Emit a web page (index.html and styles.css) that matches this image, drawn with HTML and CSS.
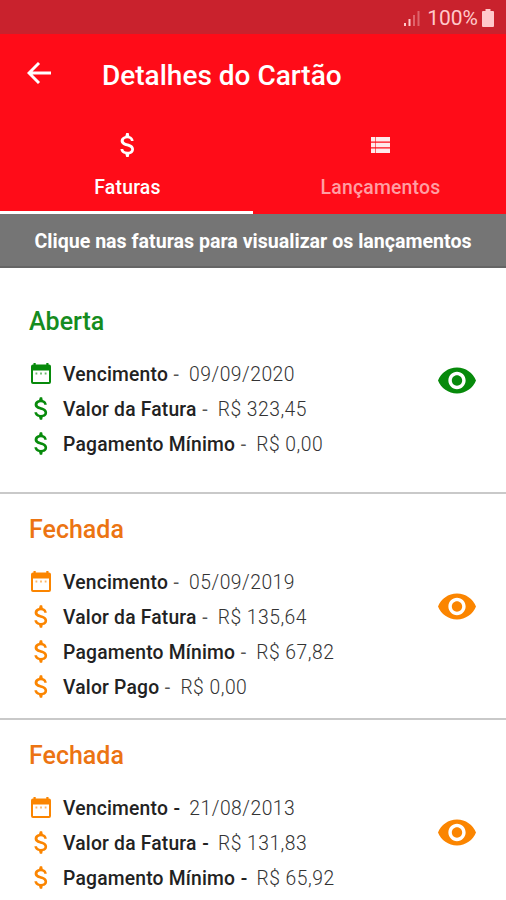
FILE: index.html
```html
<!DOCTYPE html>
<html lang="pt-BR">
<head>
<meta charset="utf-8">
<title>Detalhes do Cartão</title>
<link rel="stylesheet" href="styles.css">
</head>
<body>
<svg class="sprite" aria-hidden="true">
  <symbol id="dollar" viewBox="6 3 12 18"><path d="M11.8 10.9c-2.27-.59-3-1.2-3-2.15 0-1.09 1.01-1.85 2.7-1.85 1.78 0 2.64.85 2.7 2.1h2.01c-.07-1.72-1.12-3.3-3.21-3.81L12.500 3h-1.800L10 5.160c-1.940.420-3.500 1.680-3.500 3.610 0 2.310 1.910 3.460 4.700 4.130 2.500.600 3.200 1.480 3.200 2.410 0 .690-.690 1.790-2.900 1.790-2.060 0-2.970-.920-3.080-2.100h-2.100c.120 2.190 1.760 3.420 3.680 3.830L10.700 21h1.800l.500-2.150c1.950-.370 3.500-1.500 3.500-3.550 0-2.840-2.430-3.810-4.700-4.400z"/></symbol>
  <symbol id="calendar" viewBox="0 0 20 21"><path fill-rule="evenodd" d="M2.500 0h2.200v1.500h10.600V0h2.200v1.500H18a2 2 0 0 1 2 2V19a2 2 0 0 1-2 2H2a2 2 0 0 1-2-2V3.500a2 2 0 0 1 2-2h.500zM2 7.500V19h16V7.500z"/><path opacity=".6" d="M4.500 9.500h1.800v2H4.500zM9.100 9.500h1.800v2H9.100zM13.700 9.500h1.800v2h-1.800z"/></symbol>
  <symbol id="eye" viewBox="1 4.500 22 15"><path d="M12 4.500C7 4.500 2.730 7.610 1 12c1.730 4.390 6 7.500 11 7.500s9.270-3.110 11-7.500c-1.730-4.390-6-7.500-11-7.500zM12 17c-2.760 0-5-2.240-5-5s2.240-5 5-5 5 2.240 5 5-2.240 5-5 5zm0-8c-1.660 0-3 1.340-3 3s1.340 3 3 3 3-1.340 3-3-1.340-3-3-3z"/></symbol>
</svg>
<div class="status">
  <svg class="signal" viewBox="0 0 16 16"><path d="M0 13h2v3H0z"/><path d="M4.500 9h2v7h-2z"/><path opacity=".4" d="M9 5h2v11H9zM13.500 1h2v15h-2z"/></svg>
  <span class="charge">100%</span>
  <svg class="battery" viewBox="0 0 12 18"><path d="M3.500 0h5v2H11q1 0 1 1v14q0 1-1 1H1q-1 0-1-1V3q0-1 1-1h2.500z"/></svg>
</div>
<header class="header">
  <div class="bar">
    <svg class="back" viewBox="0 0 24 22"><path d="M12 1L2 11l10 10M2 11h22"/></svg>
    <h1 class="title"><span>Detalhes do Cartão</span></h1>
  </div>
  <nav class="tabs">
    <div class="tab active"><svg class="tab-dollar"><use href="#dollar"/></svg><span>Faturas</span></div>
    <div class="tab"><svg class="tab-list" viewBox="0 0 19 16"><path d="M0 0h4v4.600H0zM4.600 0H19v4.600H4.600zM0 5.700h4v4.600H0zM4.600 5.700H19v4.600H4.600zM0 11.400h4V16H0zM4.600 11.400H19V16H4.600z"/></svg><span>Lançamentos</span></div>
  </nav>
</header>
<div class="hint"><span>Clique nas faturas para visualizar os lançamentos</span></div>
<main>
  <section class="invoice open">
    <h2><span>Aberta</span></h2>
    <div class="row"><svg class="cal"><use href="#calendar"/></svg><b>Vencimento</b><i>-</i><span>09/09/2020</span></div>
    <div class="row"><svg class="dol"><use href="#dollar"/></svg><b>Valor da Fatura</b><i>-</i><span>R$ 323,45</span></div>
    <div class="row"><svg class="dol"><use href="#dollar"/></svg><b>Pagamento Mínimo</b><i>-</i><span>R$ 0,00</span></div>
    <svg class="eye"><use href="#eye"/></svg>
  </section>
  <section class="invoice">
    <h2><span>Fechada</span></h2>
    <div class="row"><svg class="cal"><use href="#calendar"/></svg><b>Vencimento</b><i>-</i><span>05/09/2019</span></div>
    <div class="row"><svg class="dol"><use href="#dollar"/></svg><b>Valor da Fatura</b><i>-</i><span>R$ 135,64</span></div>
    <div class="row"><svg class="dol"><use href="#dollar"/></svg><b>Pagamento Mínimo</b><i>-</i><span>R$ 67,82</span></div>
    <div class="row"><svg class="dol"><use href="#dollar"/></svg><b>Valor Pago</b><i>-</i><span>R$ 0,00</span></div>
    <svg class="eye"><use href="#eye"/></svg>
  </section>
  <section class="invoice last">
    <h2><span>Fechada</span></h2>
    <div class="row"><svg class="cal"><use href="#calendar"/></svg><b>Vencimento</b><i>-</i><span>21/08/2013</span></div>
    <div class="row"><svg class="dol"><use href="#dollar"/></svg><b>Valor da Fatura</b><i>-</i><span>R$ 131,83</span></div>
    <div class="row"><svg class="dol"><use href="#dollar"/></svg><b>Pagamento Mínimo</b><i>-</i><span>R$ 65,92</span></div>
    <svg class="eye"><use href="#eye"/></svg>
  </section>
</main>
</body>
</html>
```
FILE: styles.css
```css
* { box-sizing: border-box; }
body {
  margin: 0;
  background: #fff;
  font-family: Roboto, "Liberation Sans", sans-serif;
}
svg { display: block; flex: none; fill: currentColor; }
h1, h2 { margin: 0; font-weight: 500; }
.sprite { position: absolute; width: 0; height: 0; }

.status {
  display: flex;
  align-items: center;
  justify-content: flex-end;
  height: 34px;
  padding: 1px 12px 0 0;
  background: #c9222d;
  color: #ffc9cb;
}
.signal { width: 16px; height: 16px; margin: 1px 7px 0 0; }
.charge { font-size: 21px; line-height: 24px; margin-right: 4px; }
.battery { width: 12px; height: 18px; }

.header { height: 180px; background: #ff0c18; color: #fff; }
.bar { display: flex; align-items: center; height: 80px; padding-left: 27px; }
.back { width: 24px; height: 22px; margin: -3px 51px 0 0; fill: none; stroke: #fff; stroke-width: 2.900; }
.title { font-size: 28px; line-height: 32px; padding-top: 3px; }
.tabs { display: flex; height: 100px; }
.tab {
  flex: 1;
  display: flex;
  flex-direction: column;
  align-items: center;
  border-bottom: 3px solid transparent;
  padding: 19px 0 0 2px;
  font-size: 19.400px;
  font-weight: 500;
  line-height: 24px;
  letter-spacing: 0.200px;
  color: #ff9ea3;
}
.tab.active { color: #fff; border-color: #fff; }
.tab-dollar { width: 16px; height: 24px; margin-bottom: 19px; }
.tab-list { width: 19px; height: 16px; margin: 4px 0 23px; fill: #ffe9ea; }

.hint {
  height: 54px;
  display: flex;
  align-items: center;
  justify-content: center;
  padding-top: 2px;
  background: #757575;
  border-bottom: 2px solid #656565;
  color: #fff;
  font-size: 19.600px;
  font-weight: 700;
}

.invoice {
  position: relative;
  height: 226px;
  padding: 20px 29px 0;
  border-bottom: 2px solid #c9c9c9;
  color: #fb8500;
}
.invoice.open { color: #078a0b; padding-top: 38px; }
.invoice.last { height: 180px; border: 0; }
h2 { font-size: 25px; line-height: 32px; margin-bottom: 17.500px; color: #ec7412; }
.open h2 { color: #158c20; margin-bottom: 18px; }
.row { display: flex; align-items: center; height: 35.200px; font-size: 19.300px; letter-spacing: 0.200px; }
.row b, .row i, .row span { padding-top: 2px; }
.row b { font-weight: 500; color: #222; }
.row i { font-style: normal; color: #555; margin: 0 10px 0 5.500px; }
.last .row i { font-weight: 500; color: #222; margin: 0 9px 0 5.500px; }
.row span { font-weight: 300; color: #333; letter-spacing: 0.500px; }
.cal { width: 20px; height: 21px; margin: 0 12px 0 2px; }
.dol { width: 15px; height: 23px; margin: 0 14px 0 5px; }
.eye { position: absolute; left: 438px; top: 99px; width: 38px; height: 27px; }
```
